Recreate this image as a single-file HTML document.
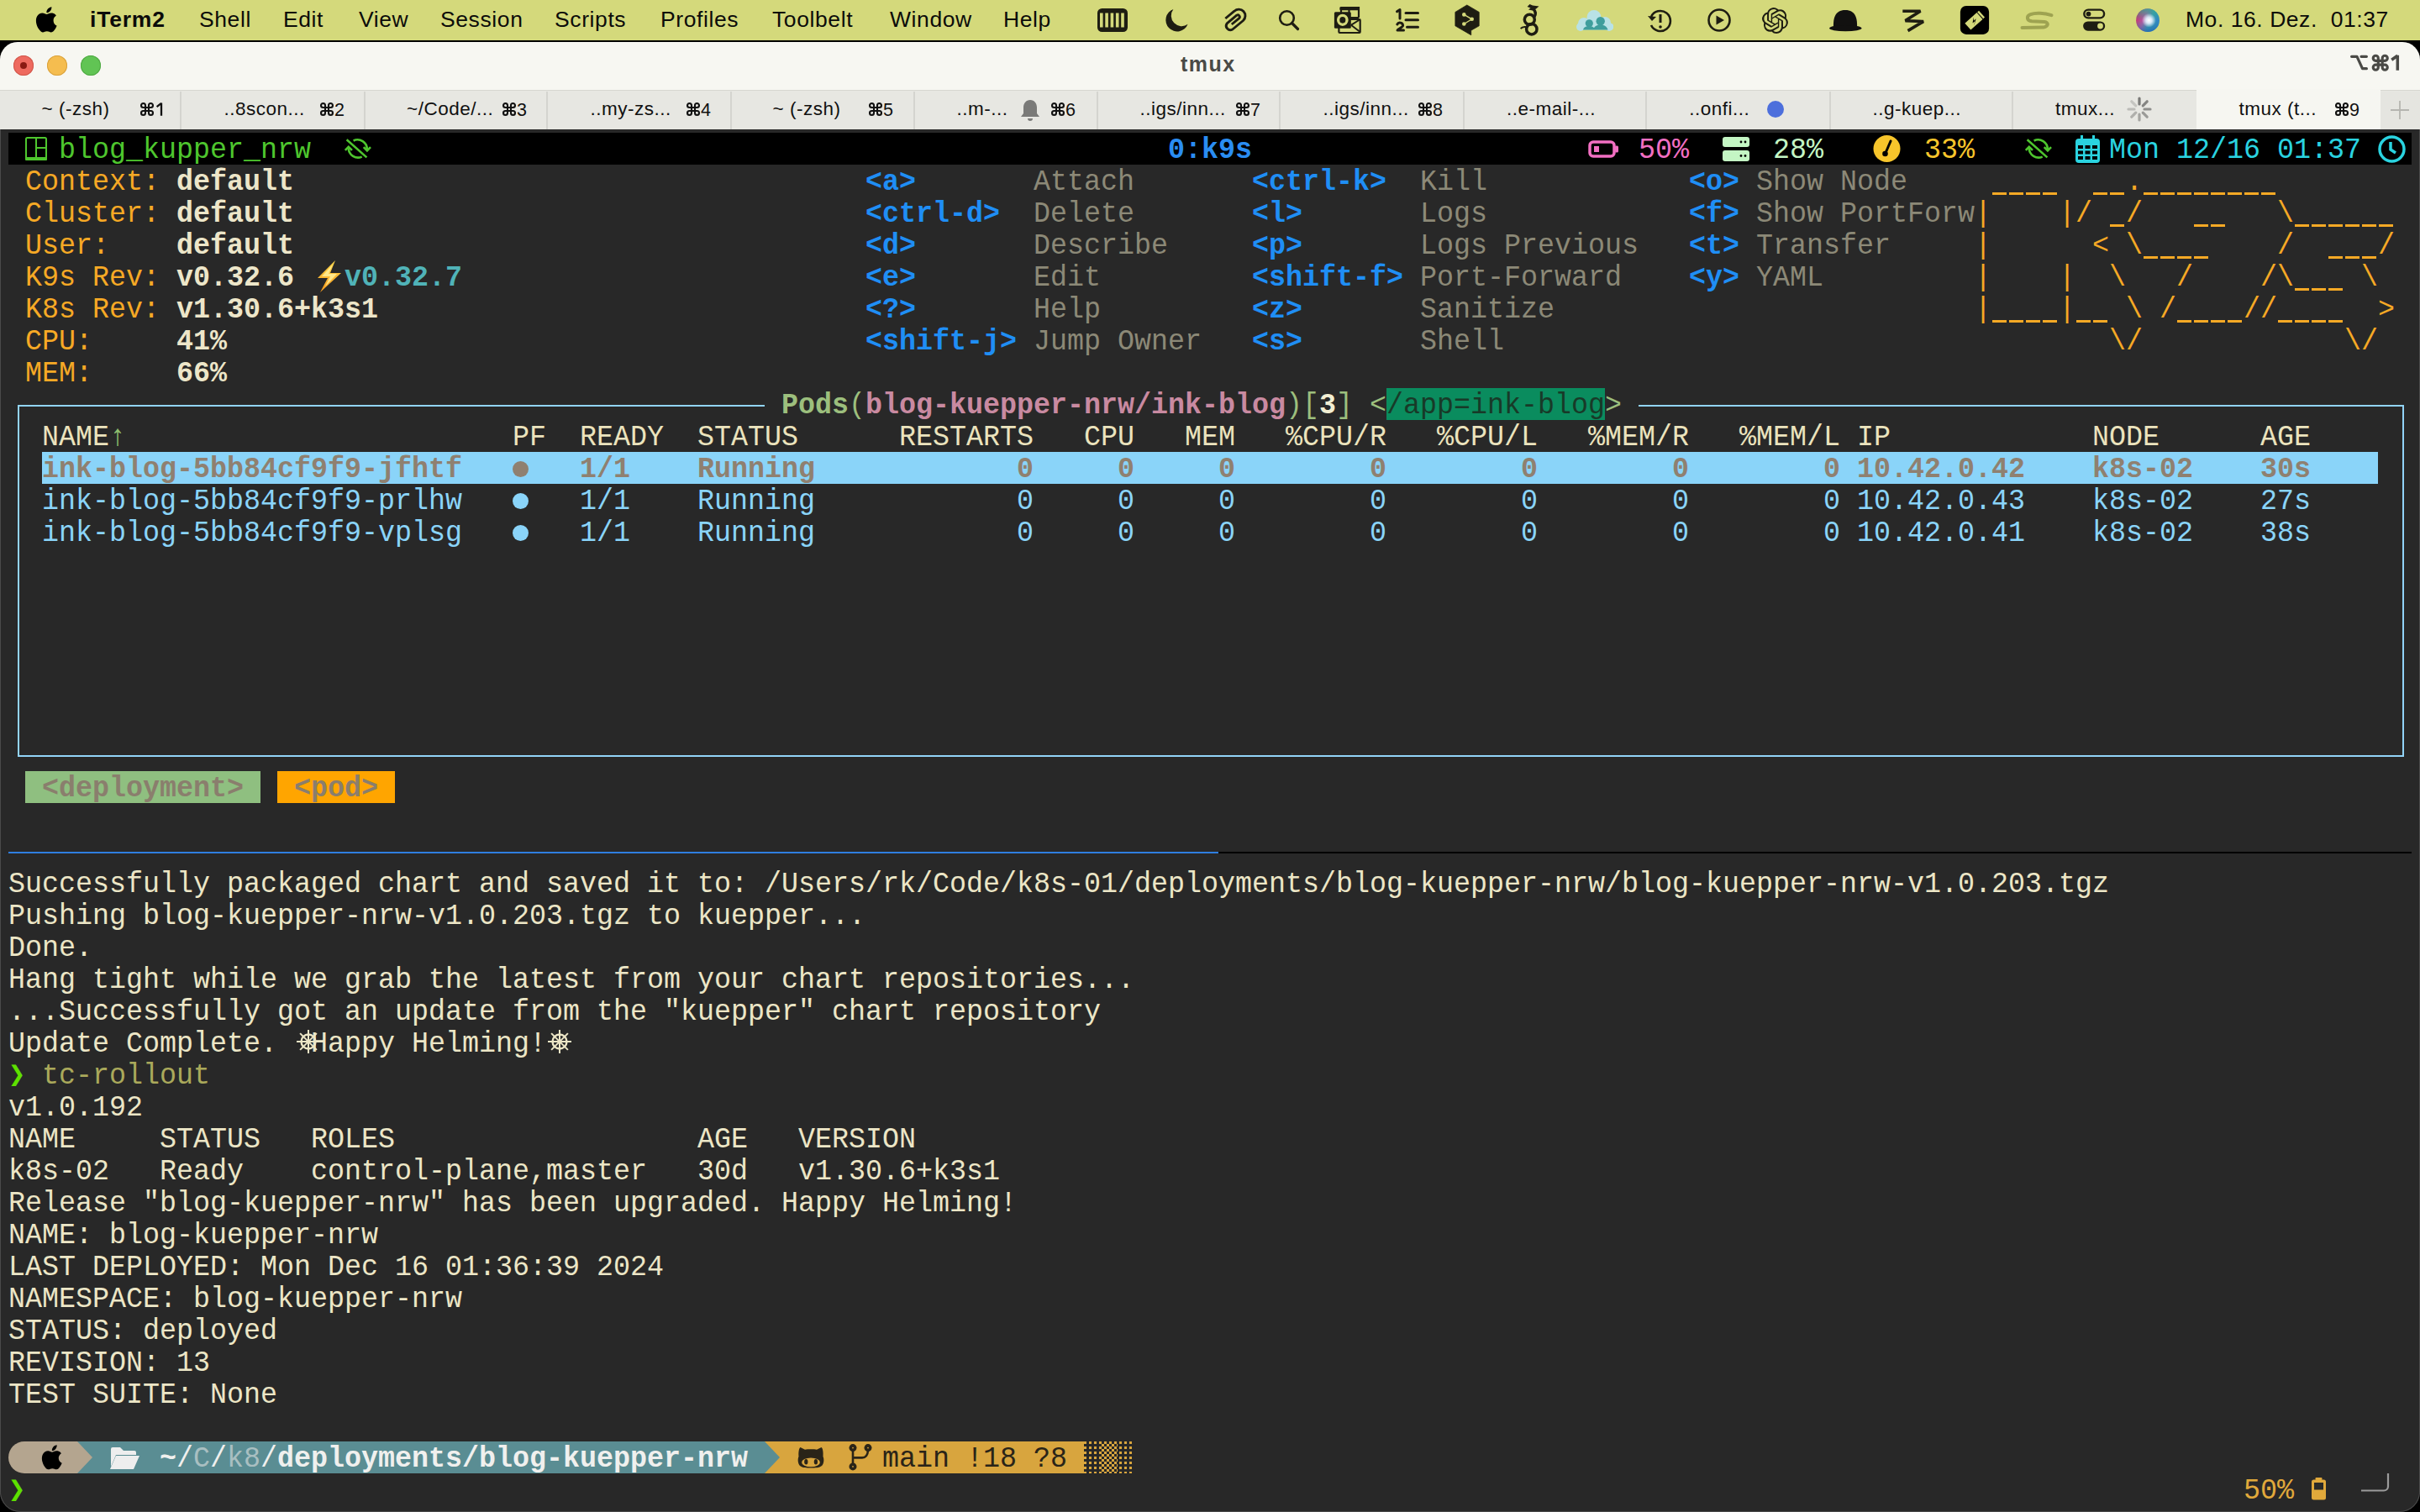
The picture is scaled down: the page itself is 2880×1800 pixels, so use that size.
<!DOCTYPE html><html><head><meta charset="utf-8"><style>
*{margin:0;padding:0;box-sizing:border-box}
html,body{width:2880px;height:1800px;overflow:hidden;background:#000}
body{position:relative;font-family:"Liberation Sans",sans-serif}
.b{position:absolute}
.t{position:absolute;font-family:"Liberation Mono",monospace;font-size:33.34px;line-height:38px;height:38px;white-space:pre;transform-origin:0 30px;transform:translateY(2px) scaleY(1.05)}
.m{position:absolute;font-family:"Liberation Sans",sans-serif;white-space:pre}
svg{position:absolute;overflow:visible}
</style></head><body><div class="b" style="left:0px;top:0px;width:2880px;height:48px;background:#d4d97b;"></div><div class="m" style="left:107px;top:-1px;font-size:26.5px;line-height:48px;letter-spacing:0.8px;color:#0c0c0a;font-weight:bold;">iTerm2</div><div class="m" style="left:237px;top:-1px;font-size:26.5px;line-height:48px;letter-spacing:0.6px;color:#0c0c0a;">Shell</div><div class="m" style="left:337px;top:-1px;font-size:26.5px;line-height:48px;letter-spacing:0.6px;color:#0c0c0a;">Edit</div><div class="m" style="left:427px;top:-1px;font-size:26.5px;line-height:48px;letter-spacing:0.6px;color:#0c0c0a;">View</div><div class="m" style="left:524px;top:-1px;font-size:26.5px;line-height:48px;letter-spacing:0.6px;color:#0c0c0a;">Session</div><div class="m" style="left:660px;top:-1px;font-size:26.5px;line-height:48px;letter-spacing:0.6px;color:#0c0c0a;">Scripts</div><div class="m" style="left:786px;top:-1px;font-size:26.5px;line-height:48px;letter-spacing:0.6px;color:#0c0c0a;">Profiles</div><div class="m" style="left:919px;top:-1px;font-size:26.5px;line-height:48px;letter-spacing:0.6px;color:#0c0c0a;">Toolbelt</div><div class="m" style="left:1059px;top:-1px;font-size:26.5px;line-height:48px;letter-spacing:0.6px;color:#0c0c0a;">Window</div><div class="m" style="left:1194px;top:-1px;font-size:26.5px;line-height:48px;letter-spacing:0.6px;color:#0c0c0a;">Help</div><div class="m" style="left:2601px;top:-1px;font-size:26.5px;line-height:48px;letter-spacing:0.55px;color:#0c0c0a;">Mo. 16. Dez.  01:37</div><svg style="left:42px;top:8px" width="26" height="31" viewBox="0 0 26 31"><path fill="#000" d="M21.6 16.4c0-3.9 3.2-5.8 3.3-5.9-1.8-2.7-4.6-3-5.6-3-2.4-.2-4.6 1.4-5.8 1.4-1.2 0-3-1.4-5-1.4C5.9 7.6 3.5 9 2.2 11.3c-2.7 4.6-.7 11.5 1.9 15.3 1.3 1.8 2.8 3.9 4.8 3.8 1.9-.1 2.7-1.2 5-1.2s3 1.2 5 1.2c2.1 0 3.4-1.9 4.6-3.7 1.5-2.1 2.1-4.1 2.1-4.2-.1 0-4-1.5-4-6.1zM17.9 5c1-1.3 1.7-3 1.5-4.8-1.5.1-3.3 1-4.4 2.3-1 1.1-1.8 2.9-1.6 4.6 1.7.2 3.4-.8 4.5-2.1z"/></svg><div class="b" style="left:0;top:50px;width:2880px;height:1750px;background:#282828;border-radius:21px 21px 24px 24px;overflow:hidden;box-shadow:inset 0 0 0 1px #4a4a4a"><div class="b" style="left:0px;top:0px;width:2880px;height:58px;background:#f7f7f2;"></div><div class="b" style="left:0px;top:58px;width:2880px;height:46px;background:#e7e7e2;"></div><div class="b" style="left:0px;top:57px;width:2880px;height:1px;background:#d6d6d0;"></div><div class="b" style="left:214px;top:59px;width:2px;height:45px;background:#d4d4cf;"></div><div class="b" style="left:433px;top:59px;width:2px;height:45px;background:#d4d4cf;"></div><div class="b" style="left:650px;top:59px;width:2px;height:45px;background:#d4d4cf;"></div><div class="b" style="left:869px;top:59px;width:2px;height:45px;background:#d4d4cf;"></div><div class="b" style="left:1087px;top:59px;width:2px;height:45px;background:#d4d4cf;"></div><div class="b" style="left:1305px;top:59px;width:2px;height:45px;background:#d4d4cf;"></div><div class="b" style="left:1522px;top:59px;width:2px;height:45px;background:#d4d4cf;"></div><div class="b" style="left:1741px;top:59px;width:2px;height:45px;background:#d4d4cf;"></div><div class="b" style="left:1958px;top:59px;width:2px;height:45px;background:#d4d4cf;"></div><div class="b" style="left:2177px;top:59px;width:2px;height:45px;background:#d4d4cf;"></div><div class="b" style="left:2394px;top:59px;width:2px;height:45px;background:#d4d4cf;"></div><div class="b" style="left:2614px;top:59px;width:2px;height:45px;background:#d4d4cf;"></div><div class="b" style="left:2833px;top:59px;width:2px;height:45px;background:#d4d4cf;"></div><div class="b" style="left:2614px;top:56px;width:219px;height:48px;background:#f6f6f1;"></div><div class="b" style="left:2833px;top:59px;width:47px;height:45px;background:#e5e5e0;"></div></div><div class="m" style="left:1405px;top:61px;font-size:25px;line-height:30px;letter-spacing:1.5px;color:#4a4a46;font-weight:bold;">tmux</div><svg style="left:2797px;top:65px" width="21" height="19" viewBox="0 0 21 19"><path d="M1.6 2.3H8L14.5 16.7H19.4M13 2.3H19.4" fill="none" stroke="#4a4a46" stroke-width="3.2" stroke-linecap="round" stroke-linejoin="round"/></svg><svg style="left:2823px;top:65px" width="19.5" height="19.5" viewBox="0 0 16 16"><path d="M6 6V3.5A2.5 2.5 0 1 0 3.5 6H12.5A2.5 2.5 0 1 0 10 3.5V12.5A2.5 2.5 0 1 0 12.5 10H3.5A2.5 2.5 0 1 0 6 12.5Z" fill="none" stroke="#4a4a46" stroke-width="2.6"/></svg><svg style="left:2845px;top:65px" width="11" height="19" viewBox="0 0 11 19"><path d="M8.3 0.8V18.8M1.2 6.2L8.3 1.2" fill="none" stroke="#4a4a46" stroke-width="3.5"/></svg><div class="b" style="left:16px;top:66px;width:24px;height:24px;border-radius:50%;background:#ee6a5f;box-shadow:inset 0 0 0 1px #d0574b"></div><div class="b" style="left:56px;top:66px;width:24px;height:24px;border-radius:50%;background:#f5bd4f;box-shadow:inset 0 0 0 1px #d9a23e"></div><div class="b" style="left:96px;top:66px;width:24px;height:24px;border-radius:50%;background:#61c454;box-shadow:inset 0 0 0 1px #4fa843"></div><div class="b" style="left:24px;top:74px;width:8px;height:8px;border-radius:50%;background:#8a1a12"></div><div class="m" style="left:49.5px;top:115px;font-size:22.5px;line-height:30px;letter-spacing:0.5px;color:#111;">~ (-zsh)</div><svg style="left:167px;top:122px" width="16" height="16" viewBox="0 0 16 16"><path d="M6 6V3.5A2.5 2.5 0 1 0 3.5 6H12.5A2.5 2.5 0 1 0 10 3.5V12.5A2.5 2.5 0 1 0 12.5 10H3.5A2.5 2.5 0 1 0 6 12.5Z" fill="none" stroke="#111" stroke-width="2.1"/></svg><svg style="left:186px;top:122px" width="8" height="16" viewBox="0 0 8 16"><path d="M6 0.6V15.8M0.6 5.2L6 0.9" fill="none" stroke="#111" stroke-width="2.3"/></svg><div class="m" style="left:266.5px;top:115px;font-size:22.5px;line-height:30px;letter-spacing:0.5px;color:#111;">..8scon...</div><svg style="left:381px;top:122px" width="16" height="16" viewBox="0 0 16 16"><path d="M6 6V3.5A2.5 2.5 0 1 0 3.5 6H12.5A2.5 2.5 0 1 0 10 3.5V12.5A2.5 2.5 0 1 0 12.5 10H3.5A2.5 2.5 0 1 0 6 12.5Z" fill="none" stroke="#111" stroke-width="2.1"/></svg><div class="m" style="left:398px;top:116px;font-size:21.5px;line-height:30px;letter-spacing:0px;color:#111;">2</div><div class="m" style="left:484.0px;top:115px;font-size:22.5px;line-height:30px;letter-spacing:0.5px;color:#111;">~/Code/...</div><svg style="left:598px;top:122px" width="16" height="16" viewBox="0 0 16 16"><path d="M6 6V3.5A2.5 2.5 0 1 0 3.5 6H12.5A2.5 2.5 0 1 0 10 3.5V12.5A2.5 2.5 0 1 0 12.5 10H3.5A2.5 2.5 0 1 0 6 12.5Z" fill="none" stroke="#111" stroke-width="2.1"/></svg><div class="m" style="left:615px;top:116px;font-size:21.5px;line-height:30px;letter-spacing:0px;color:#111;">3</div><div class="m" style="left:702.5px;top:115px;font-size:22.5px;line-height:30px;letter-spacing:0.5px;color:#111;">..my-zs...</div><svg style="left:817px;top:122px" width="16" height="16" viewBox="0 0 16 16"><path d="M6 6V3.5A2.5 2.5 0 1 0 3.5 6H12.5A2.5 2.5 0 1 0 10 3.5V12.5A2.5 2.5 0 1 0 12.5 10H3.5A2.5 2.5 0 1 0 6 12.5Z" fill="none" stroke="#111" stroke-width="2.1"/></svg><div class="m" style="left:834px;top:116px;font-size:21.5px;line-height:30px;letter-spacing:0px;color:#111;">4</div><div class="m" style="left:919.5px;top:115px;font-size:22.5px;line-height:30px;letter-spacing:0.5px;color:#111;">~ (-zsh)</div><svg style="left:1034px;top:122px" width="16" height="16" viewBox="0 0 16 16"><path d="M6 6V3.5A2.5 2.5 0 1 0 3.5 6H12.5A2.5 2.5 0 1 0 10 3.5V12.5A2.5 2.5 0 1 0 12.5 10H3.5A2.5 2.5 0 1 0 6 12.5Z" fill="none" stroke="#111" stroke-width="2.1"/></svg><div class="m" style="left:1051px;top:116px;font-size:21.5px;line-height:30px;letter-spacing:0px;color:#111;">5</div><div class="m" style="left:1138.5px;top:115px;font-size:22.5px;line-height:30px;letter-spacing:0.5px;color:#111;">..m-...</div><svg style="left:1251px;top:122px" width="16" height="16" viewBox="0 0 16 16"><path d="M6 6V3.5A2.5 2.5 0 1 0 3.5 6H12.5A2.5 2.5 0 1 0 10 3.5V12.5A2.5 2.5 0 1 0 12.5 10H3.5A2.5 2.5 0 1 0 6 12.5Z" fill="none" stroke="#111" stroke-width="2.1"/></svg><div class="m" style="left:1268px;top:116px;font-size:21.5px;line-height:30px;letter-spacing:0px;color:#111;">6</div><div class="m" style="left:1356.5px;top:115px;font-size:22.5px;line-height:30px;letter-spacing:0.5px;color:#111;">..igs/inn...</div><svg style="left:1471px;top:122px" width="16" height="16" viewBox="0 0 16 16"><path d="M6 6V3.5A2.5 2.5 0 1 0 3.5 6H12.5A2.5 2.5 0 1 0 10 3.5V12.5A2.5 2.5 0 1 0 12.5 10H3.5A2.5 2.5 0 1 0 6 12.5Z" fill="none" stroke="#111" stroke-width="2.1"/></svg><div class="m" style="left:1488px;top:116px;font-size:21.5px;line-height:30px;letter-spacing:0px;color:#111;">7</div><div class="m" style="left:1574.5px;top:115px;font-size:22.5px;line-height:30px;letter-spacing:0.5px;color:#111;">..igs/inn...</div><svg style="left:1688px;top:122px" width="16" height="16" viewBox="0 0 16 16"><path d="M6 6V3.5A2.5 2.5 0 1 0 3.5 6H12.5A2.5 2.5 0 1 0 10 3.5V12.5A2.5 2.5 0 1 0 12.5 10H3.5A2.5 2.5 0 1 0 6 12.5Z" fill="none" stroke="#111" stroke-width="2.1"/></svg><div class="m" style="left:1705px;top:116px;font-size:21.5px;line-height:30px;letter-spacing:0px;color:#111;">8</div><div class="m" style="left:1793.0px;top:115px;font-size:22.5px;line-height:30px;letter-spacing:0.5px;color:#111;">..e-mail-...</div><div class="m" style="left:2010.2px;top:115px;font-size:22.5px;line-height:30px;letter-spacing:0.5px;color:#111;">..onfi...</div><div class="m" style="left:2228.5px;top:115px;font-size:22.5px;line-height:30px;letter-spacing:0.5px;color:#111;">..g-kuep...</div><div class="m" style="left:2446.1px;top:115px;font-size:22.5px;line-height:30px;letter-spacing:0.5px;color:#111;">tmux...</div><div class="m" style="left:2664.5px;top:115px;font-size:22.5px;line-height:30px;letter-spacing:0.5px;color:#111;">tmux (t...</div><svg style="left:2779px;top:122px" width="16" height="16" viewBox="0 0 16 16"><path d="M6 6V3.5A2.5 2.5 0 1 0 3.5 6H12.5A2.5 2.5 0 1 0 10 3.5V12.5A2.5 2.5 0 1 0 12.5 10H3.5A2.5 2.5 0 1 0 6 12.5Z" fill="none" stroke="#111" stroke-width="2.1"/></svg><div class="m" style="left:2796px;top:116px;font-size:21.5px;line-height:30px;letter-spacing:0px;color:#111;">9</div><div class="b" style="left:10px;top:158px;width:2860px;height:38px;background:#000;"></div><div class="t" style="left:70px;top:158px;color:#4ec62e;">blog_kupper_nrw</div><div class="t" style="left:1390px;top:158px;color:#2a8df2;font-weight:bold;">0:k9s</div><div class="t" style="left:1950px;top:158px;color:#f26fc2;">50%</div><div class="t" style="left:2110px;top:158px;color:#c4f6c4;">28%</div><div class="t" style="left:2290px;top:158px;color:#f7c52b;">33%</div><div class="t" style="left:2510px;top:158px;color:#2ad3e0;">Mon 12/16 01:37</div><svg style="left:30px;top:163px" width="26" height="28" viewBox="0 0 26 28"><rect x="1" y="1" width="24" height="25" rx="1.5" fill="none" stroke="#4ec62e" stroke-width="2"/><rect x="0" y="24" width="26" height="4" rx="1" fill="#4ec62e"/><line x1="13" y1="1" x2="13" y2="26" stroke="#4ec62e" stroke-width="2"/><line x1="13" y1="13" x2="25" y2="13" stroke="#4ec62e" stroke-width="2"/></svg><svg style="left:400px;top:158px" width="60" height="38" viewBox="0 0 60 38"><g fill="none" stroke="#4ec62e" stroke-width="2.6" stroke-linejoin="miter"><path d="M20.6 9.5A11.3 11.3 0 0 1 36.8 20"/><path d="M32.7 17.2L36.9 21.4 41 17.2"/><path d="M30.7 28.6A11.3 11.3 0 0 1 14.8 18.5"/><path d="M10.8 20.9L14.8 16.9 19 20.9"/><path d="M12.6 8.3L36.4 29.4"/></g></svg><svg style="left:2400px;top:158px" width="60" height="38" viewBox="0 0 60 38"><g fill="none" stroke="#4ec62e" stroke-width="2.6" stroke-linejoin="miter"><path d="M20.6 9.5A11.3 11.3 0 0 1 36.8 20"/><path d="M32.7 17.2L36.9 21.4 41 17.2"/><path d="M30.7 28.6A11.3 11.3 0 0 1 14.8 18.5"/><path d="M10.8 20.9L14.8 16.9 19 20.9"/><path d="M12.6 8.3L36.4 29.4"/></g></svg><svg style="left:1890px;top:167px" width="37" height="21" viewBox="0 0 37 21"><rect x="2" y="2" width="29" height="17" rx="4" fill="none" stroke="#f26fc2" stroke-width="3.5"/><rect x="32" y="6.5" width="4" height="8" rx="1.5" fill="#f26fc2"/><rect x="7" y="7" width="6" height="7" fill="#f26fc2"/></svg><svg style="left:2050px;top:163px" width="32" height="29" viewBox="0 0 32 29"><rect x="0" y="0" width="32" height="12" rx="3" fill="#c4f6c4"/><rect x="0" y="16" width="32" height="13" rx="3" fill="#c4f6c4"/><circle cx="22" cy="6" r="1.4" fill="#000"/><circle cx="27" cy="6" r="1.4" fill="#000"/><circle cx="22" cy="22.5" r="1.4" fill="#000"/><circle cx="27" cy="22.5" r="1.4" fill="#000"/></svg><svg style="left:2229px;top:161px" width="33" height="32" viewBox="0 0 33 32"><circle cx="16.5" cy="16" r="16" fill="#f7c52b"/><path d="M21 7 L15 21" stroke="#000" stroke-width="3" stroke-linecap="round"/><circle cx="14.5" cy="22" r="3.3" fill="#000"/></svg><svg style="left:2470px;top:161px" width="29" height="33" viewBox="0 0 29 33"><rect x="0" y="4" width="29" height="29" rx="4" fill="#2ad3e0"/><rect x="6" y="0" width="3" height="8" fill="#2ad3e0"/><rect x="20" y="0" width="3" height="8" fill="#2ad3e0"/><g fill="#000"><rect x="3" y="12" width="6" height="4"/><rect x="11.5" y="12" width="6" height="4"/><rect x="20" y="12" width="6" height="4"/><rect x="3" y="18.5" width="6" height="4"/><rect x="11.5" y="18.5" width="6" height="4"/><rect x="20" y="18.5" width="6" height="4"/><rect x="3" y="25" width="6" height="4"/><rect x="11.5" y="25" width="6" height="4"/><rect x="20" y="25" width="6" height="4"/></g></svg><svg style="left:2830px;top:161px" width="33" height="33" viewBox="0 0 33 33"><circle cx="16.5" cy="16.5" r="14.5" fill="none" stroke="#2ad3e0" stroke-width="3.5"/><path d="M15 8v9l6 4" fill="none" stroke="#2ad3e0" stroke-width="3.5"/></svg><div class="t" style="left:30px;top:196px;color:#f6a925;">Context:</div><div class="t" style="left:210px;top:196px;color:#ede6c9;font-weight:bold;">default</div><div class="t" style="left:30px;top:234px;color:#f6a925;">Cluster:</div><div class="t" style="left:210px;top:234px;color:#ede6c9;font-weight:bold;">default</div><div class="t" style="left:30px;top:272px;color:#f6a925;">User:</div><div class="t" style="left:210px;top:272px;color:#ede6c9;font-weight:bold;">default</div><div class="t" style="left:30px;top:310px;color:#f6a925;">K9s Rev:</div><div class="t" style="left:210px;top:310px;color:#ede6c9;font-weight:bold;">v0.32.6</div><div class="t" style="left:30px;top:348px;color:#f6a925;">K8s Rev:</div><div class="t" style="left:210px;top:348px;color:#ede6c9;font-weight:bold;">v1.30.6+k3s1</div><div class="t" style="left:30px;top:386px;color:#f6a925;">CPU:</div><div class="t" style="left:210px;top:386px;color:#ede6c9;font-weight:bold;">41%</div><div class="t" style="left:30px;top:424px;color:#f6a925;">MEM:</div><div class="t" style="left:210px;top:424px;color:#ede6c9;font-weight:bold;">66%</div><svg style="left:376px;top:310px" width="31" height="38" viewBox="0 0 31 38"><defs><linearGradient id="lg" x1="0" y1="0" x2="0" y2="1"><stop offset="0" stop-color="#ffd84a"/><stop offset="1" stop-color="#f59a1e"/></linearGradient></defs><path d="M23 0L2 21H14L5 38 30 15H17Z" fill="url(#lg)"/><path d="M20 5L7 19H17L11 31 25 16H15Z" fill="#fff3a0" opacity="0.8"/></svg><div class="t" style="left:410px;top:310px;color:#50b3b8;font-weight:bold;">v0.32.7</div><div class="t" style="left:1030px;top:196px;color:#1f8ef5;font-weight:bold;">&lt;a&gt;</div><div class="t" style="left:1230px;top:196px;color:#8c8977;">Attach</div><div class="t" style="left:1030px;top:234px;color:#1f8ef5;font-weight:bold;">&lt;ctrl-d&gt;</div><div class="t" style="left:1230px;top:234px;color:#8c8977;">Delete</div><div class="t" style="left:1030px;top:272px;color:#1f8ef5;font-weight:bold;">&lt;d&gt;</div><div class="t" style="left:1230px;top:272px;color:#8c8977;">Describe</div><div class="t" style="left:1030px;top:310px;color:#1f8ef5;font-weight:bold;">&lt;e&gt;</div><div class="t" style="left:1230px;top:310px;color:#8c8977;">Edit</div><div class="t" style="left:1030px;top:348px;color:#1f8ef5;font-weight:bold;">&lt;?&gt;</div><div class="t" style="left:1230px;top:348px;color:#8c8977;">Help</div><div class="t" style="left:1030px;top:386px;color:#1f8ef5;font-weight:bold;">&lt;shift-j&gt;</div><div class="t" style="left:1230px;top:386px;color:#8c8977;">Jump Owner</div><div class="t" style="left:1490px;top:196px;color:#1f8ef5;font-weight:bold;">&lt;ctrl-k&gt;</div><div class="t" style="left:1690px;top:196px;color:#8c8977;">Kill</div><div class="t" style="left:1490px;top:234px;color:#1f8ef5;font-weight:bold;">&lt;l&gt;</div><div class="t" style="left:1690px;top:234px;color:#8c8977;">Logs</div><div class="t" style="left:1490px;top:272px;color:#1f8ef5;font-weight:bold;">&lt;p&gt;</div><div class="t" style="left:1690px;top:272px;color:#8c8977;">Logs Previous</div><div class="t" style="left:1490px;top:310px;color:#1f8ef5;font-weight:bold;">&lt;shift-f&gt;</div><div class="t" style="left:1690px;top:310px;color:#8c8977;">Port-Forward</div><div class="t" style="left:1490px;top:348px;color:#1f8ef5;font-weight:bold;">&lt;z&gt;</div><div class="t" style="left:1690px;top:348px;color:#8c8977;">Sanitize</div><div class="t" style="left:1490px;top:386px;color:#1f8ef5;font-weight:bold;">&lt;s&gt;</div><div class="t" style="left:1690px;top:386px;color:#8c8977;">Shell</div><div class="t" style="left:2010px;top:196px;color:#1f8ef5;font-weight:bold;">&lt;o&gt;</div><div class="t" style="left:2090px;top:196px;color:#8c8977;">Show Node</div><div class="t" style="left:2010px;top:234px;color:#1f8ef5;font-weight:bold;">&lt;f&gt;</div><div class="t" style="left:2090px;top:234px;color:#8c8977;">Show PortForw</div><div class="t" style="left:2010px;top:272px;color:#1f8ef5;font-weight:bold;">&lt;t&gt;</div><div class="t" style="left:2090px;top:272px;color:#8c8977;">Transfer</div><div class="t" style="left:2010px;top:310px;color:#1f8ef5;font-weight:bold;">&lt;y&gt;</div><div class="t" style="left:2090px;top:310px;color:#8c8977;">YAML</div><div class="t" style="left:2350px;top:196px;color:#f6a925;">         .               </div><div class="b" style="left:2371px;top:229px;width:17px;height:3px;background:#f6a925;"></div><div class="b" style="left:2391px;top:229px;width:17px;height:3px;background:#f6a925;"></div><div class="b" style="left:2411px;top:229px;width:17px;height:3px;background:#f6a925;"></div><div class="b" style="left:2431px;top:229px;width:17px;height:3px;background:#f6a925;"></div><div class="b" style="left:2491px;top:229px;width:17px;height:3px;background:#f6a925;"></div><div class="b" style="left:2511px;top:229px;width:17px;height:3px;background:#f6a925;"></div><div class="b" style="left:2551px;top:229px;width:17px;height:3px;background:#f6a925;"></div><div class="b" style="left:2571px;top:229px;width:17px;height:3px;background:#f6a925;"></div><div class="b" style="left:2591px;top:229px;width:17px;height:3px;background:#f6a925;"></div><div class="b" style="left:2611px;top:229px;width:17px;height:3px;background:#f6a925;"></div><div class="b" style="left:2631px;top:229px;width:17px;height:3px;background:#f6a925;"></div><div class="b" style="left:2651px;top:229px;width:17px;height:3px;background:#f6a925;"></div><div class="b" style="left:2671px;top:229px;width:17px;height:3px;background:#f6a925;"></div><div class="b" style="left:2691px;top:229px;width:17px;height:3px;background:#f6a925;"></div><div class="t" style="left:2350px;top:234px;color:#f6a925;">|    |/  /        \      </div><div class="b" style="left:2511px;top:267px;width:17px;height:3px;background:#f6a925;"></div><div class="b" style="left:2611px;top:267px;width:17px;height:3px;background:#f6a925;"></div><div class="b" style="left:2631px;top:267px;width:17px;height:3px;background:#f6a925;"></div><div class="b" style="left:2731px;top:267px;width:17px;height:3px;background:#f6a925;"></div><div class="b" style="left:2751px;top:267px;width:17px;height:3px;background:#f6a925;"></div><div class="b" style="left:2771px;top:267px;width:17px;height:3px;background:#f6a925;"></div><div class="b" style="left:2791px;top:267px;width:17px;height:3px;background:#f6a925;"></div><div class="b" style="left:2811px;top:267px;width:17px;height:3px;background:#f6a925;"></div><div class="b" style="left:2831px;top:267px;width:17px;height:3px;background:#f6a925;"></div><div class="t" style="left:2350px;top:272px;color:#f6a925;">|      &lt; \        /     /</div><div class="b" style="left:2551px;top:305px;width:17px;height:3px;background:#f6a925;"></div><div class="b" style="left:2571px;top:305px;width:17px;height:3px;background:#f6a925;"></div><div class="b" style="left:2591px;top:305px;width:17px;height:3px;background:#f6a925;"></div><div class="b" style="left:2611px;top:305px;width:17px;height:3px;background:#f6a925;"></div><div class="b" style="left:2771px;top:305px;width:17px;height:3px;background:#f6a925;"></div><div class="b" style="left:2791px;top:305px;width:17px;height:3px;background:#f6a925;"></div><div class="b" style="left:2811px;top:305px;width:17px;height:3px;background:#f6a925;"></div><div class="t" style="left:2350px;top:310px;color:#f6a925;">|    |  \   /    /\    \ </div><div class="b" style="left:2731px;top:343px;width:17px;height:3px;background:#f6a925;"></div><div class="b" style="left:2751px;top:343px;width:17px;height:3px;background:#f6a925;"></div><div class="b" style="left:2771px;top:343px;width:17px;height:3px;background:#f6a925;"></div><div class="t" style="left:2350px;top:348px;color:#f6a925;">|    |   \ /    //      &gt;</div><div class="b" style="left:2371px;top:381px;width:17px;height:3px;background:#f6a925;"></div><div class="b" style="left:2391px;top:381px;width:17px;height:3px;background:#f6a925;"></div><div class="b" style="left:2411px;top:381px;width:17px;height:3px;background:#f6a925;"></div><div class="b" style="left:2431px;top:381px;width:17px;height:3px;background:#f6a925;"></div><div class="b" style="left:2471px;top:381px;width:17px;height:3px;background:#f6a925;"></div><div class="b" style="left:2491px;top:381px;width:17px;height:3px;background:#f6a925;"></div><div class="b" style="left:2591px;top:381px;width:17px;height:3px;background:#f6a925;"></div><div class="b" style="left:2611px;top:381px;width:17px;height:3px;background:#f6a925;"></div><div class="b" style="left:2631px;top:381px;width:17px;height:3px;background:#f6a925;"></div><div class="b" style="left:2651px;top:381px;width:17px;height:3px;background:#f6a925;"></div><div class="b" style="left:2711px;top:381px;width:17px;height:3px;background:#f6a925;"></div><div class="b" style="left:2731px;top:381px;width:17px;height:3px;background:#f6a925;"></div><div class="b" style="left:2751px;top:381px;width:17px;height:3px;background:#f6a925;"></div><div class="b" style="left:2771px;top:381px;width:17px;height:3px;background:#f6a925;"></div><div class="t" style="left:2350px;top:386px;color:#f6a925;">        \/            \/ </div><div class="b" style="left:21px;top:482px;width:889px;height:2px;background:#92d4f8;"></div><div class="b" style="left:1950px;top:482px;width:911px;height:2px;background:#92d4f8;"></div><div class="b" style="left:21px;top:899px;width:2840px;height:2px;background:#92d4f8;"></div><div class="b" style="left:21px;top:482px;width:2px;height:419px;background:#92d4f8;"></div><div class="b" style="left:2859px;top:482px;width:2px;height:419px;background:#92d4f8;"></div><div class="t" style="left:930px;top:462px;color:#9cbf7d;font-weight:bold;">Pods</div><div class="t" style="left:1010px;top:462px;color:#9cbf7d;">(</div><div class="t" style="left:1030px;top:462px;color:#c98aa1;font-weight:bold;">blog-kuepper-nrw/ink-blog</div><div class="t" style="left:1530px;top:462px;color:#9cbf7d;">)[</div><div class="t" style="left:1570px;top:462px;color:#f2eed2;font-weight:bold;">3</div><div class="t" style="left:1590px;top:462px;color:#9cbf7d;">] &lt;</div><div class="b" style="left:1650px;top:462px;width:260px;height:38px;background:#0a8c5e;"></div><div class="t" style="left:1650px;top:462px;color:#183a28;">/app=ink-blog</div><div class="t" style="left:1910px;top:462px;color:#9cbf7d;">&gt;</div><div class="t" style="left:50px;top:500px;color:#ebe3bd;">NAME</div><div class="t" style="left:610px;top:500px;color:#ebe3bd;">PF</div><div class="t" style="left:690px;top:500px;color:#ebe3bd;">READY</div><div class="t" style="left:830px;top:500px;color:#ebe3bd;">STATUS</div><div class="t" style="left:1070px;top:500px;color:#ebe3bd;">RESTARTS</div><div class="t" style="left:1290px;top:500px;color:#ebe3bd;">CPU</div><div class="t" style="left:1410px;top:500px;color:#ebe3bd;">MEM</div><div class="t" style="left:1530px;top:500px;color:#ebe3bd;">%CPU/R</div><div class="t" style="left:1710px;top:500px;color:#ebe3bd;">%CPU/L</div><div class="t" style="left:1890px;top:500px;color:#ebe3bd;">%MEM/R</div><div class="t" style="left:2070px;top:500px;color:#ebe3bd;">%MEM/L</div><div class="t" style="left:2210px;top:500px;color:#ebe3bd;">IP</div><div class="t" style="left:2490px;top:500px;color:#ebe3bd;">NODE</div><div class="t" style="left:2690px;top:500px;color:#ebe3bd;">AGE</div><div class="t" style="left:130px;top:500px;color:#8fbf6f;font-weight:bold;">↑</div><div class="b" style="left:50px;top:538px;width:2780px;height:38px;background:#8ad4f9;"></div><div class="t" style="left:50px;top:538px;color:#8f8070;font-weight:bold;">ink-blog-5bb84cf9f9-jfhtf</div><div class="b" style="left:610px;top:549px;width:19px;height:19px;border-radius:50%;background:#8f8070"></div><div class="t" style="left:690px;top:538px;color:#8f8070;font-weight:bold;">1/1</div><div class="t" style="left:830px;top:538px;color:#8f8070;font-weight:bold;">Running</div><div class="t" style="left:1210px;top:538px;color:#8f8070;font-weight:bold;">0</div><div class="t" style="left:1330px;top:538px;color:#8f8070;font-weight:bold;">0</div><div class="t" style="left:1450px;top:538px;color:#8f8070;font-weight:bold;">0</div><div class="t" style="left:1630px;top:538px;color:#8f8070;font-weight:bold;">0</div><div class="t" style="left:1810px;top:538px;color:#8f8070;font-weight:bold;">0</div><div class="t" style="left:1990px;top:538px;color:#8f8070;font-weight:bold;">0</div><div class="t" style="left:2170px;top:538px;color:#8f8070;font-weight:bold;">0</div><div class="t" style="left:2210px;top:538px;color:#8f8070;font-weight:bold;">10.42.0.42</div><div class="t" style="left:2490px;top:538px;color:#8f8070;font-weight:bold;">k8s-02</div><div class="t" style="left:2690px;top:538px;color:#8f8070;font-weight:bold;">30s</div><div class="t" style="left:50px;top:576px;color:#8ad4f9;">ink-blog-5bb84cf9f9-prlhw</div><div class="b" style="left:610px;top:587px;width:19px;height:19px;border-radius:50%;background:#8ad4f9"></div><div class="t" style="left:690px;top:576px;color:#8ad4f9;">1/1</div><div class="t" style="left:830px;top:576px;color:#8ad4f9;">Running</div><div class="t" style="left:1210px;top:576px;color:#8ad4f9;">0</div><div class="t" style="left:1330px;top:576px;color:#8ad4f9;">0</div><div class="t" style="left:1450px;top:576px;color:#8ad4f9;">0</div><div class="t" style="left:1630px;top:576px;color:#8ad4f9;">0</div><div class="t" style="left:1810px;top:576px;color:#8ad4f9;">0</div><div class="t" style="left:1990px;top:576px;color:#8ad4f9;">0</div><div class="t" style="left:2170px;top:576px;color:#8ad4f9;">0</div><div class="t" style="left:2210px;top:576px;color:#8ad4f9;">10.42.0.43</div><div class="t" style="left:2490px;top:576px;color:#8ad4f9;">k8s-02</div><div class="t" style="left:2690px;top:576px;color:#8ad4f9;">27s</div><div class="t" style="left:50px;top:614px;color:#8ad4f9;">ink-blog-5bb84cf9f9-vplsg</div><div class="b" style="left:610px;top:625px;width:19px;height:19px;border-radius:50%;background:#8ad4f9"></div><div class="t" style="left:690px;top:614px;color:#8ad4f9;">1/1</div><div class="t" style="left:830px;top:614px;color:#8ad4f9;">Running</div><div class="t" style="left:1210px;top:614px;color:#8ad4f9;">0</div><div class="t" style="left:1330px;top:614px;color:#8ad4f9;">0</div><div class="t" style="left:1450px;top:614px;color:#8ad4f9;">0</div><div class="t" style="left:1630px;top:614px;color:#8ad4f9;">0</div><div class="t" style="left:1810px;top:614px;color:#8ad4f9;">0</div><div class="t" style="left:1990px;top:614px;color:#8ad4f9;">0</div><div class="t" style="left:2170px;top:614px;color:#8ad4f9;">0</div><div class="t" style="left:2210px;top:614px;color:#8ad4f9;">10.42.0.41</div><div class="t" style="left:2490px;top:614px;color:#8ad4f9;">k8s-02</div><div class="t" style="left:2690px;top:614px;color:#8ad4f9;">38s</div><div class="b" style="left:30px;top:918px;width:280px;height:38px;background:#8fbf80;"></div><div class="t" style="left:50px;top:918px;color:#8a7e6d;font-weight:bold;">&lt;deployment&gt;</div><div class="b" style="left:330px;top:918px;width:140px;height:38px;background:#ffa500;"></div><div class="t" style="left:350px;top:918px;color:#8a7e6d;font-weight:bold;">&lt;pod&gt;</div><div class="b" style="left:10px;top:1014px;width:1440px;height:2px;background:#2f7fe0;"></div><div class="b" style="left:1450px;top:1014px;width:1420px;height:2px;background:#000;"></div><div class="t" style="left:10px;top:1032px;color:#ece6c6;">Successfully packaged chart and saved it to: /Users/rk/Code/k8s-01/deployments/blog-kuepper-nrw/blog-kuepper-nrw-v1.0.203.tgz</div><div class="t" style="left:10px;top:1070px;color:#ece6c6;">Pushing blog-kuepper-nrw-v1.0.203.tgz to kuepper...</div><div class="t" style="left:10px;top:1108px;color:#ece6c6;">Done.</div><div class="t" style="left:10px;top:1146px;color:#ece6c6;">Hang tight while we grab the latest from your chart repositories...</div><div class="t" style="left:10px;top:1184px;color:#ece6c6;">...Successfully got an update from the "kuepper" chart repository</div><div class="t" style="left:10px;top:1222px;color:#ece6c6;">Update Complete.  Happy Helming! </div><div class="t" style="left:10px;top:1298px;color:#ece6c6;">v1.0.192</div><div class="t" style="left:10px;top:1336px;color:#ece6c6;">NAME     STATUS   ROLES                  AGE   VERSION</div><div class="t" style="left:10px;top:1374px;color:#ece6c6;">k8s-02   Ready    control-plane,master   30d   v1.30.6+k3s1</div><div class="t" style="left:10px;top:1412px;color:#ece6c6;">Release "blog-kuepper-nrw" has been upgraded. Happy Helming!</div><div class="t" style="left:10px;top:1450px;color:#ece6c6;">NAME: blog-kuepper-nrw</div><div class="t" style="left:10px;top:1488px;color:#ece6c6;">LAST DEPLOYED: Mon Dec 16 01:36:39 2024</div><div class="t" style="left:10px;top:1526px;color:#ece6c6;">NAMESPACE: blog-kuepper-nrw</div><div class="t" style="left:10px;top:1564px;color:#ece6c6;">STATUS: deployed</div><div class="t" style="left:10px;top:1602px;color:#ece6c6;">REVISION: 13</div><div class="t" style="left:10px;top:1640px;color:#ece6c6;">TEST SUITE: None</div><div class="t" style="left:10px;top:1260px;color:#5ee000;font-weight:bold;">❯</div><div class="t" style="left:50px;top:1260px;color:#aaa95b;">tc-rollout</div><div class="t" style="left:10px;top:1754px;color:#5ee000;font-weight:bold;">❯</div><div class="b" style="left:10px;top:1716px;width:100px;height:38px;background:#b4a58f;border-radius:19px 0 0 19px"></div><div class="b" style="left:92px;top:1716px;width:818px;height:38px;background:#5a8d93;"></div><svg style="left:90px;top:1716px" width="22" height="38" viewBox="0 0 22 38"><path d="M0 0H2L20 19L2 38H0Z" fill="#b4a58f"/></svg><div class="b" style="left:910px;top:1716px;width:380px;height:38px;background:#d8a53e;"></div><svg style="left:908px;top:1716px" width="22" height="38" viewBox="0 0 22 38"><path d="M0 0H2L20 19L2 38H0Z" fill="#5a8d93"/></svg><svg style="left:1290px;top:1716px" width="60" height="38" viewBox="0 0 60 38"><defs><pattern id="d1" width="6" height="6" patternUnits="userSpaceOnUse"><rect x="0" y="0" width="3" height="3" fill="#d8a53e"/></pattern><pattern id="d2" width="6" height="6" patternUnits="userSpaceOnUse"><rect x="0" y="0" width="3" height="3" fill="#d8a53e"/><rect x="3" y="3" width="3" height="3" fill="#d8a53e"/></pattern></defs><rect x="0" y="0" width="20" height="38" fill="url(#d1)"/><rect x="20" y="0" width="20" height="38" fill="url(#d2)"/><rect x="40" y="0" width="18" height="38" fill="url(#d1)"/></svg><svg style="left:49px;top:1720px" width="25" height="30" viewBox="0 0 26 31"><path fill="#000" d="M21.6 16.4c0-3.9 3.2-5.8 3.3-5.9-1.8-2.7-4.6-3-5.6-3-2.4-.2-4.6 1.4-5.8 1.4-1.2 0-3-1.4-5-1.4C5.9 7.6 3.5 9 2.2 11.3c-2.7 4.6-.7 11.5 1.9 15.3 1.3 1.8 2.8 3.9 4.8 3.8 1.9-.1 2.7-1.2 5-1.2s3 1.2 5 1.2c2.1 0 3.4-1.9 4.6-3.7 1.5-2.1 2.1-4.1 2.1-4.2-.1 0-4-1.5-4-6.1zM17.9 5c1-1.3 1.7-3 1.5-4.8-1.5.1-3.3 1-4.4 2.3-1 1.1-1.8 2.9-1.6 4.6 1.7.2 3.4-.8 4.5-2.1z"/></svg><svg style="left:130px;top:1722px" width="37" height="28" viewBox="0 0 37 28"><path d="M2 3a2 2 0 0 1 2-2h9l4 4h13a2 2 0 0 1 2 2v3H8L2 24Z" fill="#eeeeee"/><path d="M8 11h28l-7 16H1Z" fill="#eeeeee"/></svg><div class="t" style="left:190px;top:1716px;color:#f0f0ee;font-weight:bold;">~</div><div class="t" style="left:210px;top:1716px;color:#f0f0ee;">/</div><div class="t" style="left:230px;top:1716px;color:#a9bfc1;">C</div><div class="t" style="left:250px;top:1716px;color:#f0f0ee;">/</div><div class="t" style="left:270px;top:1716px;color:#a9bfc1;">k8</div><div class="t" style="left:310px;top:1716px;color:#f0f0ee;">/</div><div class="t" style="left:330px;top:1716px;color:#f0f0ee;font-weight:bold;">deployments/blog-kuepper-nrw</div><svg style="left:930px;top:1712px" width="120" height="46" viewBox="0 0 120 46"><path d="M20.5 22C20 16 21 12 22.5 11L28 13.8C31 13.2 39 13.2 42 13.8L47.5 11C49 12 50 16 49.5 22C51 25 50.5 30.5 48 33C45 35.5 40 35.5 35 35.5S25 35.5 22 33C19.5 30.5 19 25 20.5 22Z" fill="#2a2418"/><ellipse cx="35" cy="28.9" rx="10.9" ry="5.4" fill="#d8a53e"/><ellipse cx="29.3" cy="28.3" rx="2.1" ry="3.2" fill="#2a2418"/><ellipse cx="40.9" cy="28.3" rx="2.1" ry="3.2" fill="#2a2418"/><path d="M85 11.6V33.9M85 23.4H96C100.5 23.4 102.5 21 103 15" fill="none" stroke="#2a2418" stroke-width="2.6"/><circle cx="85" cy="11.6" r="4.5" fill="#2a2418"/><circle cx="103" cy="11.6" r="4.5" fill="#2a2418"/><circle cx="85" cy="33.9" r="4.5" fill="#2a2418"/><circle cx="85" cy="11.6" r="0.9" fill="#d8a53e"/><circle cx="103" cy="11.6" r="0.9" fill="#d8a53e"/><circle cx="85" cy="33.9" r="0.9" fill="#d8a53e"/></svg><div class="t" style="left:1050px;top:1716px;color:#2a2418;">main !18 ?8</div><div class="t" style="left:2670px;top:1754px;color:#e1a93b;">50%</div><svg style="left:2751px;top:1759px" width="17" height="27" viewBox="0 0 17 27"><rect x="4.5" y="0" width="8" height="3" rx="1" fill="#e1a93b"/><rect x="0" y="2.5" width="17" height="24" rx="2.5" fill="#e1a93b"/><rect x="3" y="6" width="11" height="8.5" fill="#2a2a28"/></svg><svg style="left:2809px;top:1753px" width="35" height="24" viewBox="0 0 35 24"><path d="M1 21.5H28a5 5 0 0 0 5-5V1" fill="none" stroke="#9b9b9b" stroke-width="2.2"/></svg><svg style="left:1306px;top:10px" width="36" height="28" viewBox="0 0 36 28"><rect x="0" y="0" width="36" height="28" rx="5.5" fill="#1e1d12"/><rect x="3.0" y="5.5" width="3.6" height="17" fill="#d4d97b"/><rect x="9.3" y="5.5" width="3.6" height="17" fill="#d4d97b"/><rect x="15.6" y="5.5" width="3.6" height="17" fill="#d4d97b"/><rect x="21.9" y="5.5" width="3.6" height="17" fill="#d4d97b"/><rect x="28.2" y="5.5" width="3.6" height="17" fill="#d4d97b"/></svg><svg style="left:1380px;top:4px" width="40" height="40" viewBox="0 0 40 40"><path d="M16.4 7A13.6 13.6 0 1 0 33.6 24.8A12.5 12.5 0 0 1 16.4 7Z" fill="#1e1d12"/></svg><svg style="left:1450px;top:4px" width="40" height="40" viewBox="0 0 40 40"><path d="M8.3 18L19 9.2A7.6 7.6 0 0 1 29.5 20.5L16.8 31A5 5 0 0 1 10.2 23.8L21.8 14.2A2.3 2.3 0 0 1 24.8 17.6L15.8 25" fill="none" stroke="#1e1d12" stroke-width="2.9" stroke-linecap="butt" stroke-linejoin="round"/></svg><svg style="left:1521px;top:11px" width="26" height="25" viewBox="0 0 26 25"><circle cx="10.5" cy="10.5" r="8.3" fill="none" stroke="#1e1d12" stroke-width="2.6"/><path d="M16.5 16.5L23.5 23.5" stroke="#1e1d12" stroke-width="3.2" stroke-linecap="round"/></svg><svg style="left:1580px;top:4px" width="42" height="40" viewBox="0 0 42 40"><path d="M15.4 5.2H37V17" fill="none" stroke="#1e1d12" stroke-width="2.2"/><rect x="14.4" y="4.2" width="23.5" height="4" rx="1" fill="#1e1d12"/><path d="M16 6V12M25.5 6V17H37" fill="none" stroke="#1e1d12" stroke-width="2.2"/><rect x="13.4" y="19" width="25.3" height="16" rx="1" fill="none" stroke="#1e1d12" stroke-width="2.2"/><path d="M27.8 25.8L38 19.5M27.8 25.8L38 33.5" stroke="#1e1d12" stroke-width="2"/><rect x="7.9" y="10.2" width="19.9" height="19.5" rx="1.5" fill="#1e1d12"/><ellipse cx="17.8" cy="19.8" rx="5.2" ry="5.5" fill="none" stroke="#d4d97b" stroke-width="3.3"/></svg><svg style="left:1660px;top:4px" width="32" height="40" viewBox="0 0 32 40"><path d="M2.5 9.8L6 7.5V18" fill="none" stroke="#1e1d12" stroke-width="3" stroke-linejoin="round" stroke-linecap="round"/><path d="M2.8 25A3.6 3.6 0 0 1 9.6 26.5C9.6 28.5 3.2 30.5 3 32H10.5" fill="none" stroke="#1e1d12" stroke-width="3" stroke-linejoin="round" stroke-linecap="round"/><path d="M13 11.4H27.5M13 19.8H27.5M14.5 28.3H27.5" stroke="#1e1d12" stroke-width="3" stroke-linecap="round"/></svg><svg style="left:1720px;top:2px" width="48" height="44" viewBox="0 0 48 44"><path d="M25.8 4L40.2 12.4V28.8L30.7 34.2V39.7L11.9 28.8V12.4Z" fill="#1e1d12" stroke="#1e1d12" stroke-width="0.8" stroke-linejoin="round"/><circle cx="22.3" cy="15.4" r="2.3" fill="#d4d97b"/><circle cx="22.3" cy="26.5" r="2.3" fill="#d4d97b"/><circle cx="31.7" cy="20.8" r="2.3" fill="#d4d97b"/><path d="M22.3 15.4L31.7 20.8 22.3 26.5" fill="none" stroke="#d4d97b" stroke-width="1.4"/></svg><svg style="left:1800px;top:2px" width="40" height="44" viewBox="0 0 40 44"><circle cx="22.8" cy="32.7" r="6.2" fill="none" stroke="#1e1d12" stroke-width="3.5"/><circle cx="20.3" cy="21.2" r="6" fill="none" stroke="#1e1d12" stroke-width="3.5"/><path d="M25.5 19C28.5 15 27.5 11 24 8" fill="none" stroke="#1e1d12" stroke-width="3.3"/><path d="M17.5 6L20.5 3 24 4.5 31.5 5.5 28 8.5 24 10.5 19 9.5 21.5 7.5Z" fill="#1e1d12"/><path d="M9.7 32.2C11 30.5 13 29.8 16 30.2" fill="none" stroke="#1e1d12" stroke-width="2"/></svg><svg style="left:1870px;top:4px" width="56" height="40" viewBox="0 0 56 40"><g fill="#b9e2e6"><circle cx="27" cy="16.5" r="8.5"/><circle cx="15" cy="24" r="7"/><circle cx="40" cy="23" r="7"/><circle cx="11" cy="28" r="5"/><circle cx="45" cy="28" r="5"/><rect x="8" y="24" width="42" height="7.5" rx="3"/></g><g fill="#3f9e9c"><circle cx="21.3" cy="23.8" r="4.6"/><circle cx="34.7" cy="21.3" r="5.2"/><path d="M14 31.5C15 28 18 27 21.3 27S27 28 28 31.5ZM26 31.5C27 27.5 30.5 25.5 34.7 25.5S42.5 27.5 43.5 31.5Z"/></g></svg><svg style="left:1960px;top:11px" width="29" height="27" viewBox="0 0 29 27"><path d="M5 9A12 12 0 1 1 5 19" fill="none" stroke="#1e1d12" stroke-width="2.6"/><path d="M1 8l5 6 5-5" fill="#1e1d12"/><path d="M16 6v10" stroke="#1e1d12" stroke-width="3"/><circle cx="16" cy="21" r="1.8" fill="#1e1d12"/></svg><svg style="left:2032px;top:10px" width="28" height="28" viewBox="0 0 28 28"><circle cx="14" cy="14" r="12.5" fill="none" stroke="#1e1d12" stroke-width="2.6"/><path d="M10.5 8.5L20 14 10.5 19.5Z" fill="#1e1d12"/></svg><svg style="left:2097px;top:9px" width="31" height="31" viewBox="0 0 24 24"><path d="M22.2819 9.8211a5.9847 5.9847 0 0 0-.5157-4.9108 6.0462 6.0462 0 0 0-6.5098-2.9A6.0651 6.0651 0 0 0 4.9807 4.1818a5.9847 5.9847 0 0 0-3.9977 2.9 6.0462 6.0462 0 0 0 .7427 7.0966 5.98 5.98 0 0 0 .511 4.9107 6.051 6.051 0 0 0 6.5146 2.9001A5.9847 5.9847 0 0 0 13.2599 24a6.0557 6.0557 0 0 0 5.7718-4.2058 5.9894 5.9894 0 0 0 3.9977-2.9001 6.0557 6.0557 0 0 0-.7475-7.0729zm-9.022 12.6081a4.4755 4.4755 0 0 1-2.8764-1.0408l.1419-.0804 4.7783-2.7582a.7948.7948 0 0 0 .3927-.6813v-6.7369l2.02 1.1686a.071.071 0 0 1 .038.052v5.5826a4.504 4.504 0 0 1-4.4945 4.4944zm-9.6607-4.1254a4.4708 4.4708 0 0 1-.5346-3.0137l.142.0852 4.783 2.7582a.7712.7712 0 0 0 .7806 0l5.8428-3.3685v2.3324a.0804.0804 0 0 1-.0332.0615L9.74 19.9502a4.4992 4.4992 0 0 1-6.1408-1.6464zM2.3408 7.8956a4.485 4.485 0 0 1 2.3655-1.9728V11.6a.7664.7664 0 0 0 .3879.6765l5.8144 3.3543-2.0201 1.1685a.0757.0757 0 0 1-.071 0l-4.8303-2.7865A4.504 4.504 0 0 1 2.3408 7.872zm16.5963 3.8558L13.1038 8.364 15.1192 7.2a.0757.0757 0 0 1 .071 0l4.8303 2.7913a4.4944 4.4944 0 0 1-.6765 8.1042v-5.6772a.79.79 0 0 0-.407-.667zm2.0107-3.0231l-.142-.0852-4.7735-2.7818a.7759.7759 0 0 0-.7854 0L9.409 9.2297V6.8974a.0662.0662 0 0 1 .0284-.0615l4.8303-2.7866a4.4992 4.4992 0 0 1 6.6802 4.66zM8.3065 12.863l-2.02-1.1638a.0804.0804 0 0 1-.038-.0567V6.0742a4.4992 4.4992 0 0 1 7.3757-3.4537l-.142.0805L8.704 5.459a.7948.7948 0 0 0-.3927.6813zm1.0976-2.3654l2.602-1.4998 2.6069 1.4998v2.9994l-2.5974 1.5-2.6067-1.5Z" fill="#1e1d12"/></svg><svg style="left:2170px;top:4px" width="50" height="40" viewBox="0 0 50 40"><path d="M12 29C11.5 18 13.5 8 26 8S40.5 18 40 29Z" fill="#121110"/><ellipse cx="26.3" cy="29.6" rx="19.3" ry="3.7" fill="#121110"/></svg><svg style="left:2250px;top:4px" width="44" height="40" viewBox="0 0 44 40"><path d="M14.3 9.3H35.5L17.5 20.6 39 21.6 20.5 32.6" fill="none" stroke="#1e1d12" stroke-width="3.6" stroke-linejoin="miter" stroke-miterlimit="3"/></svg><svg style="left:2325px;top:4px" width="50" height="40" viewBox="0 0 50 40"><rect x="7.9" y="3" width="34.2" height="33.9" rx="7" fill="#000"/><g transform="rotate(-42 24.5 20.5)"><rect x="14" y="15.5" width="19" height="10.5" fill="#d4d97b"/><rect x="34" y="15.5" width="2.4" height="10.5" fill="#d4d97b"/><path d="M26.5 17L21 21.5H24.5L20 25 27.5 20.3H24Z" fill="#000"/></g></svg><svg style="left:2400px;top:4px" width="46" height="40" viewBox="0 0 46 40"><path d="M41.5 14.2C33 11.5 22 11 16.5 13.2S12 20.5 18 21.3L33 22C38.5 22.6 38 27.5 32 28.6L6.5 29" fill="none" stroke="#9ea351" stroke-width="4" stroke-linecap="round" stroke-linejoin="round"/></svg><svg style="left:2470px;top:4px" width="44" height="40" viewBox="0 0 44 40"><rect x="10.3" y="7.6" width="23.8" height="9.8" rx="4.9" fill="none" stroke="#1e1d12" stroke-width="2.4"/><circle cx="15.5" cy="12.6" r="2.9" fill="#1e1d12"/><rect x="9.1" y="21.4" width="26.1" height="11.3" rx="5.65" fill="#1e1d12"/><circle cx="29.5" cy="27" r="3.4" fill="#d4d97b"/></svg><svg style="left:2540px;top:8px" width="32" height="32" viewBox="0 0 32 32"><defs><radialGradient id="s1" cx="0.55" cy="0.5" r="0.5"><stop offset="0" stop-color="#ffffff"/><stop offset="0.25" stop-color="#e8f0ff" stop-opacity="0.9"/><stop offset="0.6" stop-color="#ffffff" stop-opacity="0"/></radialGradient><linearGradient id="s2" x1="0" y1="0.3" x2="1" y2="0.7"><stop offset="0" stop-color="#c8306a"/><stop offset="0.35" stop-color="#b05aa8"/><stop offset="0.6" stop-color="#3a9ab8"/><stop offset="1" stop-color="#2a7cc8"/></linearGradient><linearGradient id="s3" x1="0.5" y1="0" x2="0.5" y2="1"><stop offset="0" stop-color="#30a890" stop-opacity="0.8"/><stop offset="0.5" stop-color="#30a890" stop-opacity="0"/><stop offset="1" stop-color="#1a50b0" stop-opacity="0.6"/></linearGradient></defs><circle cx="16" cy="16.2" r="13.9" fill="url(#s2)"/><circle cx="16" cy="16.2" r="13.9" fill="url(#s3)"/><circle cx="16" cy="16.2" r="13.9" fill="url(#s1)"/></svg><svg style="left:1214px;top:117px" width="24" height="29" viewBox="0 0 24 29"><path d="M12 2c-5 0-8 4-8 9v7l-3 4h22l-3-4v-7c0-5-3-9-8-9Z" fill="#7a7a78"/><path d="M9 24a3 3 0 0 0 6 0Z" fill="#7a7a78"/></svg><div class="b" style="left:2103px;top:120px;width:20px;height:20px;border-radius:50%;background:#4d6fdc"></div><svg style="left:2530px;top:114px" width="32" height="32" viewBox="0 0 32 32"><line x1="16" y1="3" x2="16" y2="10" stroke="#6e6e6c" stroke-width="3.2" stroke-linecap="round" opacity="0.90" transform="rotate(0 16 16)"/><line x1="16" y1="3" x2="16" y2="10" stroke="#6e6e6c" stroke-width="3.2" stroke-linecap="round" opacity="0.81" transform="rotate(45 16 16)"/><line x1="16" y1="3" x2="16" y2="10" stroke="#6e6e6c" stroke-width="3.2" stroke-linecap="round" opacity="0.72" transform="rotate(90 16 16)"/><line x1="16" y1="3" x2="16" y2="10" stroke="#6e6e6c" stroke-width="3.2" stroke-linecap="round" opacity="0.63" transform="rotate(135 16 16)"/><line x1="16" y1="3" x2="16" y2="10" stroke="#6e6e6c" stroke-width="3.2" stroke-linecap="round" opacity="0.54" transform="rotate(180 16 16)"/><line x1="16" y1="3" x2="16" y2="10" stroke="#6e6e6c" stroke-width="3.2" stroke-linecap="round" opacity="0.45" transform="rotate(225 16 16)"/><line x1="16" y1="3" x2="16" y2="10" stroke="#6e6e6c" stroke-width="3.2" stroke-linecap="round" opacity="0.36" transform="rotate(270 16 16)"/><line x1="16" y1="3" x2="16" y2="10" stroke="#6e6e6c" stroke-width="3.2" stroke-linecap="round" opacity="0.27" transform="rotate(315 16 16)"/></svg><svg style="left:2845px;top:120px" width="22" height="22" viewBox="0 0 22 22"><path d="M11 0V22M0 11H22" stroke="#b5b5b0" stroke-width="1.8"/></svg><svg style="left:352px;top:1225px" width="30" height="30" viewBox="-15 -15 30 30"><circle r="8.5" fill="none" stroke="#ece6c6" stroke-width="2.4"/><line x1="0" y1="-14" x2="0" y2="14" transform="rotate(0)" stroke="#ece6c6" stroke-width="2"/><line x1="0" y1="-14" x2="0" y2="14" transform="rotate(45)" stroke="#ece6c6" stroke-width="2"/><line x1="0" y1="-14" x2="0" y2="14" transform="rotate(90)" stroke="#ece6c6" stroke-width="2"/><line x1="0" y1="-14" x2="0" y2="14" transform="rotate(135)" stroke="#ece6c6" stroke-width="2"/><circle r="2" fill="#ece6c6"/></svg><svg style="left:651px;top:1225px" width="30" height="30" viewBox="-15 -15 30 30"><circle r="8.5" fill="none" stroke="#ece6c6" stroke-width="2.4"/><line x1="0" y1="-14" x2="0" y2="14" transform="rotate(0)" stroke="#ece6c6" stroke-width="2"/><line x1="0" y1="-14" x2="0" y2="14" transform="rotate(45)" stroke="#ece6c6" stroke-width="2"/><line x1="0" y1="-14" x2="0" y2="14" transform="rotate(90)" stroke="#ece6c6" stroke-width="2"/><line x1="0" y1="-14" x2="0" y2="14" transform="rotate(135)" stroke="#ece6c6" stroke-width="2"/><circle r="2" fill="#ece6c6"/></svg></body></html>
